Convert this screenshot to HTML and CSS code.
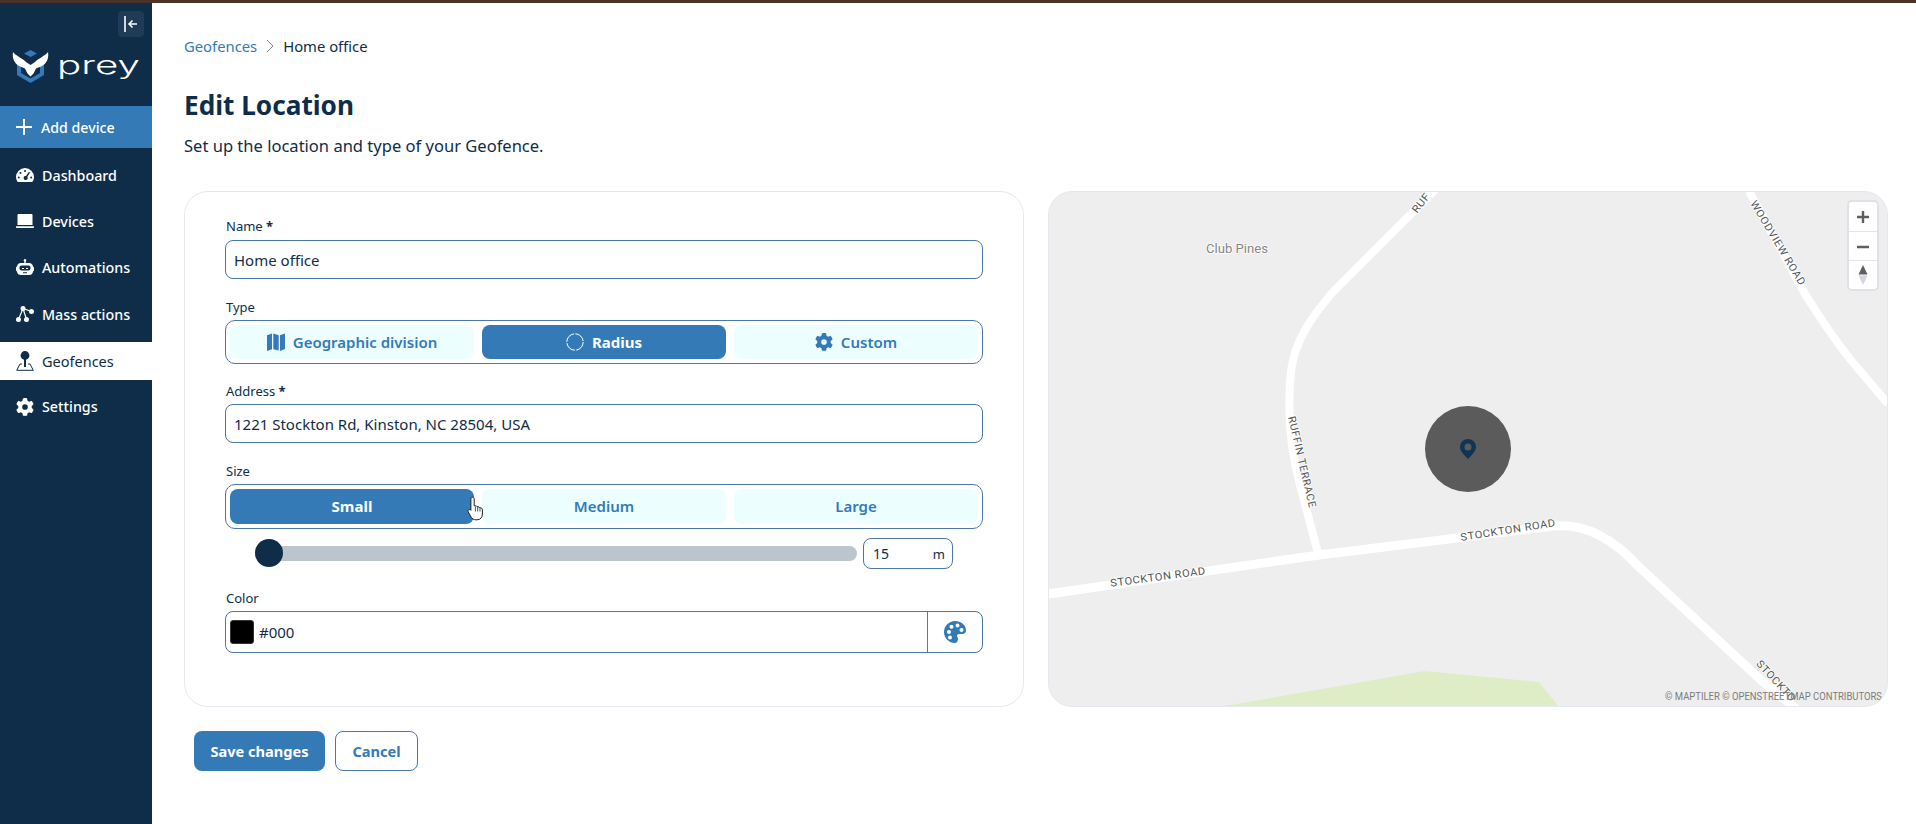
FILE: index.html
```html
<!DOCTYPE html>
<html lang="en">
<head>
<meta charset="utf-8">
<title>Edit Location</title>
<link rel="stylesheet" href="styles.css">
</head>
<body>
<svg class="defs" width="0" height="0" aria-hidden="true">
  <defs>
    <symbol id="i-gear" viewBox="0 0 512 512"><path d="M495.9 166.6c3.2 8.7 .5 18.4-6.4 24.6l-43.3 39.4c1.1 8.3 1.7 16.8 1.7 25.4s-.6 17.1-1.7 25.4l43.3 39.4c6.9 6.2 9.6 15.9 6.4 24.6c-4.4 11.9-9.7 23.3-15.8 34.3l-4.7 8.1c-6.6 11-14 21.4-22.1 31.2c-5.9 7.2-15.7 9.6-24.5 6.8l-55.7-17.7c-13.4 10.3-28.2 18.9-44 25.4l-12.5 57.1c-2 9.1-9 16.3-18.2 17.8c-13.8 2.3-28 3.5-42.5 3.5s-28.7-1.2-42.5-3.5c-9.2-1.5-16.2-8.7-18.2-17.8l-12.5-57.1c-15.8-6.5-30.6-15.1-44-25.4L83.1 425.9c-8.8 2.8-18.6 .3-24.5-6.8c-8.1-9.8-15.5-20.2-22.1-31.2l-4.7-8.1c-6.1-11-11.4-22.4-15.8-34.3c-3.2-8.7-.5-18.4 6.4-24.6l43.3-39.4C64.6 273.1 64 264.6 64 256s.6-17.1 1.7-25.4L22.4 191.2c-6.9-6.2-9.6-15.9-6.4-24.6c4.4-11.9 9.7-23.3 15.8-34.3l4.7-8.1c6.6-11 14-21.4 22.1-31.2c5.9-7.2 15.7-9.6 24.5-6.8l55.7 17.7c13.4-10.3 28.2-18.9 44-25.4l12.5-57.1c2-9.1 9-16.3 18.2-17.8C227.3 1.2 241.5 0 256 0s28.7 1.2 42.5 3.5c9.2 1.5 16.2 8.7 18.2 17.8l12.5 57.1c15.8 6.5 30.6 15.1 44 25.4l55.7-17.7c8.8-2.8 18.6-.3 24.5 6.8c8.1 9.8 15.5 20.2 22.1 31.2l4.7 8.1c6.1 11 11.4 22.4 15.8 34.3zM256 336a80 80 0 1 0 0-160 80 80 0 1 0 0 160z" fill="currentColor"/></symbol>
  </defs>
</svg>
<div class="stripe"></div>
<div class="layout">
  <aside class="sidebar">
    <button class="toggle" type="button" aria-label="Collapse">
      <svg width="16" height="18" viewBox="0 0 16 18"><path d="M2 1v16M14 9H6M9.500 5.500 6 9l3.500 3.500" fill="none" stroke="#fff" stroke-width="1.600"/></svg>
    </button>
    <div class="logo">
      <svg width="152" height="38" viewBox="0 0 152 38">
        <path d="M30.500 1 24 4.600 30.500 8 37 4.600z" fill="#337ab7"/>
        <path d="M17 13v13l13.500 8L44 26V13l-4 3v8l-9.500 5.500L21 24v-8z" fill="#337ab7"/>
        <path d="M13 3c3 4 9 6 13 10l4.500 3L35 13c4-4 10-6 13-10 1 6-1 11-6 14l-6 2.500-2.500 5-3 3-3-3-2.500-5-6-2.500C14 14 12 9 13 3z" fill="#fff"/>
        <text class="wordmark" x="57" y="25" textLength="83" lengthAdjust="spacingAndGlyphs">prey</text>
      </svg>
    </div>
    <a class="add" href="#">
      <svg width="16" height="16" viewBox="0 0 16 16"><path d="M8 0v16M0 8h16" stroke="#fff" stroke-width="2"/></svg>
      <span>Add device</span>
    </a>
    <nav class="nav">
      <a class="nav-item" href="#">
        <svg class="nav-icon" viewBox="0 0 18 14"><path fill-rule="evenodd" d="M9 0a9 9 0 0 1 9 9c0 1.700-.5 3.300-1.300 4.500-.2.300-.5.500-.9.500H2.200c-.4 0-.7-.2-.9-.5A8.600 8.600 0 0 1 0 9a9 9 0 0 1 9-9zM9 2a1 1 0 1 0 0 2 1 1 0 0 0 0-2zM4.500 4a1 1 0 1 0 0 2 1 1 0 0 0 0-2zM2.800 8.500a1 1 0 1 0 0 2 1 1 0 0 0 0-2zM15.200 8.500a1 1 0 1 0 0 2 1 1 0 0 0 0-2zM13 3.800 10 8a2 2 0 1 0 1.300.9l2.700-4.500z" fill="#fff"/></svg>
        <span>Dashboard</span>
      </a>
      <a class="nav-item" href="#">
        <svg class="nav-icon" viewBox="0 0 18 14"><path d="M2.500 0h13c.6 0 1 .4 1 1v10h-15V1c0-.6.4-1 1-1zM0 12.300h18V13c0 .6-.4 1-1 1H1c-.6 0-1-.4-1-1z" fill="#fff"/></svg>
        <span>Devices</span>
      </a>
      <a class="nav-item" href="#">
        <svg class="nav-icon" viewBox="0 0 18 18"><path fill-rule="evenodd" d="M9 0a1.300 1.300 0 0 1 .7 2.400V4H13a4 4 0 0 1 4 3.500c.6.300 1 .8 1 1.500v2c0 .7-.4 1.200-1 1.500a4 4 0 0 1-4 3.500H5a4 4 0 0 1-4-3.500C.4 12.200 0 11.700 0 11V9c0-.7.4-1.200 1-1.500A4 4 0 0 1 5 4h3.300V2.400A1.300 1.300 0 0 1 9 0zM5.500 6.500a2 2 0 0 0-2 2v1a2 2 0 0 0 2 2h7a2 2 0 0 0 2-2v-1a2 2 0 0 0-2-2zM6 9h2v1H6zm4 0h2v1h-2zM7 13.200h4v1H7z" fill="#fff"/></svg>
        <span>Automations</span>
      </a>
      <a class="nav-item" href="#">
        <svg class="nav-icon" viewBox="0 0 18 16"><g fill="#fff"><circle cx="7" cy="2.500" r="2.500"/><circle cx="15.500" cy="5.500" r="2.500"/><circle cx="2.500" cy="13.500" r="2.500"/><circle cx="10.500" cy="13.500" r="2.500"/></g><path d="M7 2.500 15.500 5.500M7 2.500 2.500 13.500M7 2.500l3.500 11" stroke="#fff" stroke-width="1.200"/></svg>
        <span>Mass actions</span>
      </a>
      <a class="nav-item active" href="#">
        <svg class="nav-icon tall" viewBox="0 0 18 20"><circle cx="9" cy="4.500" r="4.400" fill="#0f2d48"/><path d="M8 8h2v8H8z" fill="#0f2d48"/><path d="M6 13H4L.7 19.300h16.600L14 13h-2" fill="none" stroke="#0f2d48" stroke-width="1"/></svg>
        <span>Geofences</span>
      </a>
      <a class="nav-item" href="#">
        <svg class="nav-icon gear"><use href="#i-gear"/></svg>
        <span>Settings</span>
      </a>
    </nav>
  </aside>

  <main class="main">
    <div class="crumbs">
      <a class="crumb-link" href="#">Geofences</a>
      <svg class="crumb-sep" width="10" height="14" viewBox="0 0 10 14"><path d="m2 1 6 6-6 6" fill="none" stroke="#7f8c9a" stroke-width="1"/></svg>
      <span>Home office</span>
    </div>
    <h1 class="title">Edit Location</h1>
    <p class="subtitle">Set up the location and type of your Geofence.</p>

    <div class="panels">
      <section class="card">
        <div class="label name-label">Name <b>*</b></div>
        <div class="input">Home office</div>

        <div class="label after-input">Type</div>
        <div class="segments">
          <div class="segment">
            <svg class="seg-icon" viewBox="0 0 18 18"><path d="M0 2.200 5 .5v15.800L0 18zM6.300.5l5.400 1.700v15.300l-5.400-1.300zM13 2.200 18 .5V16l-5 2z" fill="currentColor"/></svg>
            Geographic division
          </div>
          <div class="segment on">
            <svg class="seg-icon" viewBox="0 0 18 18"><circle cx="9" cy="9" r="8.200" fill="none" stroke="#fff" stroke-width="1" stroke-dasharray="11.500 1.400"/></svg>
            Radius
          </div>
          <div class="segment">
            <svg class="seg-icon"><use href="#i-gear"/></svg>
            Custom
          </div>
        </div>

        <div class="label after-group">Address <b>*</b></div>
        <div class="input">1221 Stockton Rd, Kinston, NC 28504, USA</div>

        <div class="label after-input">Size</div>
        <div class="segments size">
          <div class="segment on">Small</div>
          <div class="segment">Medium</div>
          <div class="segment">Large</div>
          <svg class="cursor" width="18" height="25" viewBox="0 0 18 25"><path d="M5.500 1.200c1 0 1.700.7 1.700 1.700v7l1.200-.2c.6-.1 1.300.3 1.500.9l1 .1c.7-.1 1.300.3 1.500.9l.8.100c1.200 0 2.200.9 2.200 2.100V18c0 3.300-2 5.800-5.300 5.800H9c-2.400 0-3.800-1-4.900-2.700L1.300 16c-.5-.9-.3-1.800.4-2.200.8-.5 1.700-.2 2.200.5V2.900c0-1 .7-1.700 1.600-1.700z" fill="#fff" stroke="#222" stroke-width="1"/><path d="M8.400 10.500v5M10.700 11v4.500M13 12v3.500" stroke="#222" stroke-width=".8"/></svg>
        </div>

        <div class="slider-row">
          <div class="track"><span class="thumb"></span></div>
          <div class="number"><span>15</span><span class="unit">m</span></div>
        </div>

        <div class="label after-slider">Color</div>
        <div class="color-input">
          <span class="swatch"></span>
          <span class="color-value">#000</span>
          <span class="palette">
            <svg width="22" height="22" viewBox="0 0 22 22"><path fill-rule="evenodd" d="M11 0c6 0 11 4 11 9.500 0 2.800-2.300 3.500-4 3.500h-3c-1.200 0-2 .8-2 1.800 0 .5.300.9.500 1.400.3.500.5 1 .5 1.800 0 2-1.300 4-3 4C4.700 22 0 17 0 11S5 0 11 0zM5 9a2 2 0 1 0 0 4 2 2 0 0 0 0-4zM7.500 3.800a2 2 0 1 0 0 4 2 2 0 0 0 0-4zM13.500 2.500a2 2 0 1 0 0 4 2 2 0 0 0 0-4zM17.500 7a2 2 0 1 0 0 4 2 2 0 0 0 0-4zM6 14.500a2 2 0 1 0 0 4 2 2 0 0 0 0-4z" fill="#337ab7"/></svg>
          </span>
        </div>
      </section>

      <section class="map">
        <svg class="map-art" viewBox="0 0 840 516" width="840" height="516">
          <polygon points="171,516 377,480 491,491 511,516" fill="#dfedc6"/>
          <g fill="none" stroke="#fff" stroke-linejoin="round">
            <path d="M388 -2 284 102C262 128 247 150 243 180C238 230 245 270 253 298L270 362" stroke-width="8"/>
            <path d="M0 403 271 364 506 335Q530 333 551 344Q572 355 590 375L713 489 763 530" stroke-width="9"/>
            <path d="M701 0 757 103Q780 140 802 168L840 213" stroke-width="8"/>
          </g>
          <circle cx="420" cy="258" r="43" fill="#5b5b5b"/>
          <path fill-rule="evenodd" d="M420 248a8 8 0 0 1 8 8c0 4-4 8-8 12-4-4-8-8-8-12a8 8 0 0 1 8-8zm0 4.500a3.500 3.500 0 1 0 0 7 3.500 3.500 0 0 0 0-7z" fill="#0f3556"/>
          <g class="map-labels">
            <text class="place" x="189" y="57" textLength="62" lengthAdjust="spacingAndGlyphs">Club Pines</text>
            <text x="110" y="386" textLength="96" lengthAdjust="spacingAndGlyphs" transform="rotate(-7.500 110 386)">STOCKTON ROAD</text>
            <text x="460" y="339" textLength="96" lengthAdjust="spacingAndGlyphs" transform="rotate(-8.900 460 339)">STOCKTON ROAD</text>
            <text x="254" y="271" textLength="94" lengthAdjust="spacingAndGlyphs" transform="rotate(77 254 271)">RUFFIN TERRACE</text>
            <text x="730" y="52" textLength="97" lengthAdjust="spacingAndGlyphs" transform="rotate(59 730 52)">WOODVIEW ROAD</text>
            <text x="373" y="12" textLength="22" lengthAdjust="spacingAndGlyphs" transform="rotate(-52 373 12)">RUF</text>
            <text x="728" y="490" textLength="52" lengthAdjust="spacingAndGlyphs" transform="rotate(47 728 490)">STOCKTO</text>
          </g>
          <text class="attribution" x="834" y="509" textLength="217" lengthAdjust="spacingAndGlyphs">© MAPTILER © OPENSTREETMAP CONTRIBUTORS</text>
        </svg>
        <div class="map-controls">
          <div class="ctl"><svg width="12" height="12" viewBox="0 0 12 12"><path d="M6 0v12M0 6h12" stroke="#5f5f5f" stroke-width="2.400"/></svg></div>
          <div class="ctl"><svg width="12" height="12" viewBox="0 0 12 12"><path d="M0 6h12" stroke="#5f5f5f" stroke-width="2.400"/></svg></div>
          <div class="ctl"><svg width="10" height="20" viewBox="0 0 10 20"><path d="M5 0 9.500 9.500H.5z" fill="#5f5f5f"/><path d="M5 20 9.500 10.500H.5z" fill="#d3d6dc"/></svg></div>
        </div>
      </section>
    </div>

    <div class="actions">
      <button class="btn primary" type="button">Save changes</button>
      <button class="btn ghost" type="button">Cancel</button>
    </div>
  </main>
</div>
</body>
</html>
```

FILE: styles.css
```css
* { box-sizing: border-box; }
html, body { margin: 0; padding: 0; height: 824px; overflow: hidden; }
body { font-family: "Noto Sans", "Open Sans", sans-serif; color: #0f2d48; background: #fff; }
a { text-decoration: none; color: inherit; }
.defs { position: absolute; }

.stripe { height: 3px; background: #4a3226; }
.layout { display: flex; height: 821px; }

.sidebar { width: 152px; flex: none; background: #0f2d48; display: flex; flex-direction: column; padding-top: 8px; color: #fff; }
.toggle { align-self: flex-end; width: 26px; height: 26px; margin-right: 8px; border: 0; padding: 0; border-radius: 4px; background: #1f3b56; display: flex; align-items: center; justify-content: center; }
.logo { margin-top: 12px; height: 38px; }
.logo svg { display: block; }
.wordmark { font-family: "Inter", "DejaVu Sans", sans-serif; font-size: 24px; font-weight: 300; fill: #fff; }
.add { margin-top: 19px; height: 42px; background: #337ab7; display: flex; align-items: center; gap: 9px; padding-left: 16px; font-size: 14.200px; font-weight: 500; color: #fff; }
.nav { margin-top: 8px; display: flex; flex-direction: column; gap: 8.400px; }
.nav-item { height: 38px; display: flex; align-items: center; gap: 8px; padding-left: 16px; font-size: 14.300px; font-weight: 500; color: #fff; }
.nav-item.active { background: #fff; color: #0f2d48; font-weight: 400; font-size: 14.500px; }
.nav-icon { width: 18px; height: 18px; flex: none; }
.nav-icon.tall { height: 20px; }
.gear { color: #fff; }

.main { flex: 1; padding: 32px 28px 0 32px; min-width: 0; }
.crumbs { height: 22px; display: flex; align-items: center; gap: 8px; font-size: 14.800px; line-height: 22px; color: #0f2d48; }
.crumb-link { color: #337ab7; }
.title { margin: 30px 0 0; font-size: 26.200px; line-height: 36px; font-weight: 700; color: #0f2d48; }
.subtitle { margin: 11px 0 0; font-size: 16.550px; line-height: 24px; color: #0f2d48; }

.panels { margin-top: 33px; display: grid; grid-template-columns: 840px 840px; gap: 24px; height: 516px; }
.card { border: 1px solid #e4e8ef; border-radius: 24px; padding: 25px 40px 0 40px; background: #fff; }
.label { font-size: 13px; line-height: 18px; margin-bottom: 4px; color: #0f2d48; padding-left: 1px; }
.name-label { margin-bottom: 5px; }
.label b { font-weight: 700; }
.after-input { margin-top: 19px; }
.after-group { margin-top: 18px; }
.after-slider { margin-top: 20px; }
.input { height: 39px; border: 1px solid #4a76ad; border-radius: 8px; padding: 0 8px; display: flex; align-items: center; font-size: 15px; color: #0f2d48; background: #fff; }

.segments { position: relative; height: 44px; border: 1px solid #4a76ad; border-radius: 10px; padding: 4px; display: grid; grid-template-columns: repeat(3, 1fr); gap: 8px; }
.segments.size { height: 45px; }
.segments.size .segment { padding-bottom: 2px; }
.segment { border-radius: 8px; background: #edfeff; color: #337ab7; display: flex; align-items: center; justify-content: center; gap: 8px; font-size: 15px; font-weight: 600; }
.segment.on { background: #337ab7; color: #fff; font-weight: 700; }
.seg-icon { width: 18px; height: 18px; flex: none; color: #337ab7; }
.cursor { position: absolute; left: 241px; top: 11px; }

.slider-row { margin-top: 9px; padding-left: 30px; display: flex; align-items: center; gap: 6px; height: 31px; }
.track { position: relative; width: 602px; height: 15px; background: #bcc4cd; border-radius: 8px; }
.thumb { position: absolute; left: 0; top: -7px; width: 28px; height: 28px; border-radius: 50%; background: #0f2d48; }
.number { width: 90px; height: 31px; border: 1px solid #4a76ad; border-radius: 8px; display: flex; justify-content: space-between; align-items: center; padding: 0 7px 0 9px; font-size: 14px; }
.unit { font-size: 13px; }

.color-input { height: 42px; border: 1px solid #4a76ad; border-radius: 8px; display: flex; align-items: center; padding-left: 4px; font-size: 15px; }
.swatch { width: 24px; height: 24px; border-radius: 3px; background: #000; border: 1px solid #333; flex: none; }
.color-value { margin-left: 5px; flex: 1; }
.palette { width: 55px; height: 100%; border-left: 1px solid #6d7680; display: flex; align-items: center; justify-content: center; }

.map { position: relative; border-radius: 24px; overflow: hidden; background: #eeeeee; border: 1px solid #e4e8ef; }
.map-art { display: block; position: absolute; left: -1px; top: -1px; }
.map-labels text { font-family: "Roboto", sans-serif; font-size: 10.500px; fill: #555; text-anchor: middle; dominant-baseline: central; letter-spacing: .5px; stroke: #fff; stroke-width: 1.500px; paint-order: stroke; }
.map-labels .place { font-size: 13px; fill: #858585; letter-spacing: 0; }
.attribution { font-family: "Roboto", sans-serif; font-size: 10px; fill: #7b7b7b; text-anchor: end; }
.map-controls { position: absolute; right: 8px; top: 8px; width: 32px; height: 91px; border: 2px solid #e0e1e8; border-radius: 5px; background: #fff; display: flex; flex-direction: column; }
.ctl { flex: 1; display: flex; align-items: center; justify-content: center; padding-top: 1px; border-bottom: 1px solid #e4e4ea; }
.ctl:last-child { border-bottom: 0; padding-top: 0; }

.actions { margin-top: 24px; padding-left: 10px; display: flex; gap: 10px; }
.btn { height: 40px; border-radius: 8px; font-family: inherit; font-size: 14.600px; font-weight: 700; padding: 0; }
.primary { width: 131px; background: #337ab7; color: #fff; border: 0; }
.ghost { width: 83px; background: #fff; color: #337ab7; border: 1px solid #4a76ad; }
```
